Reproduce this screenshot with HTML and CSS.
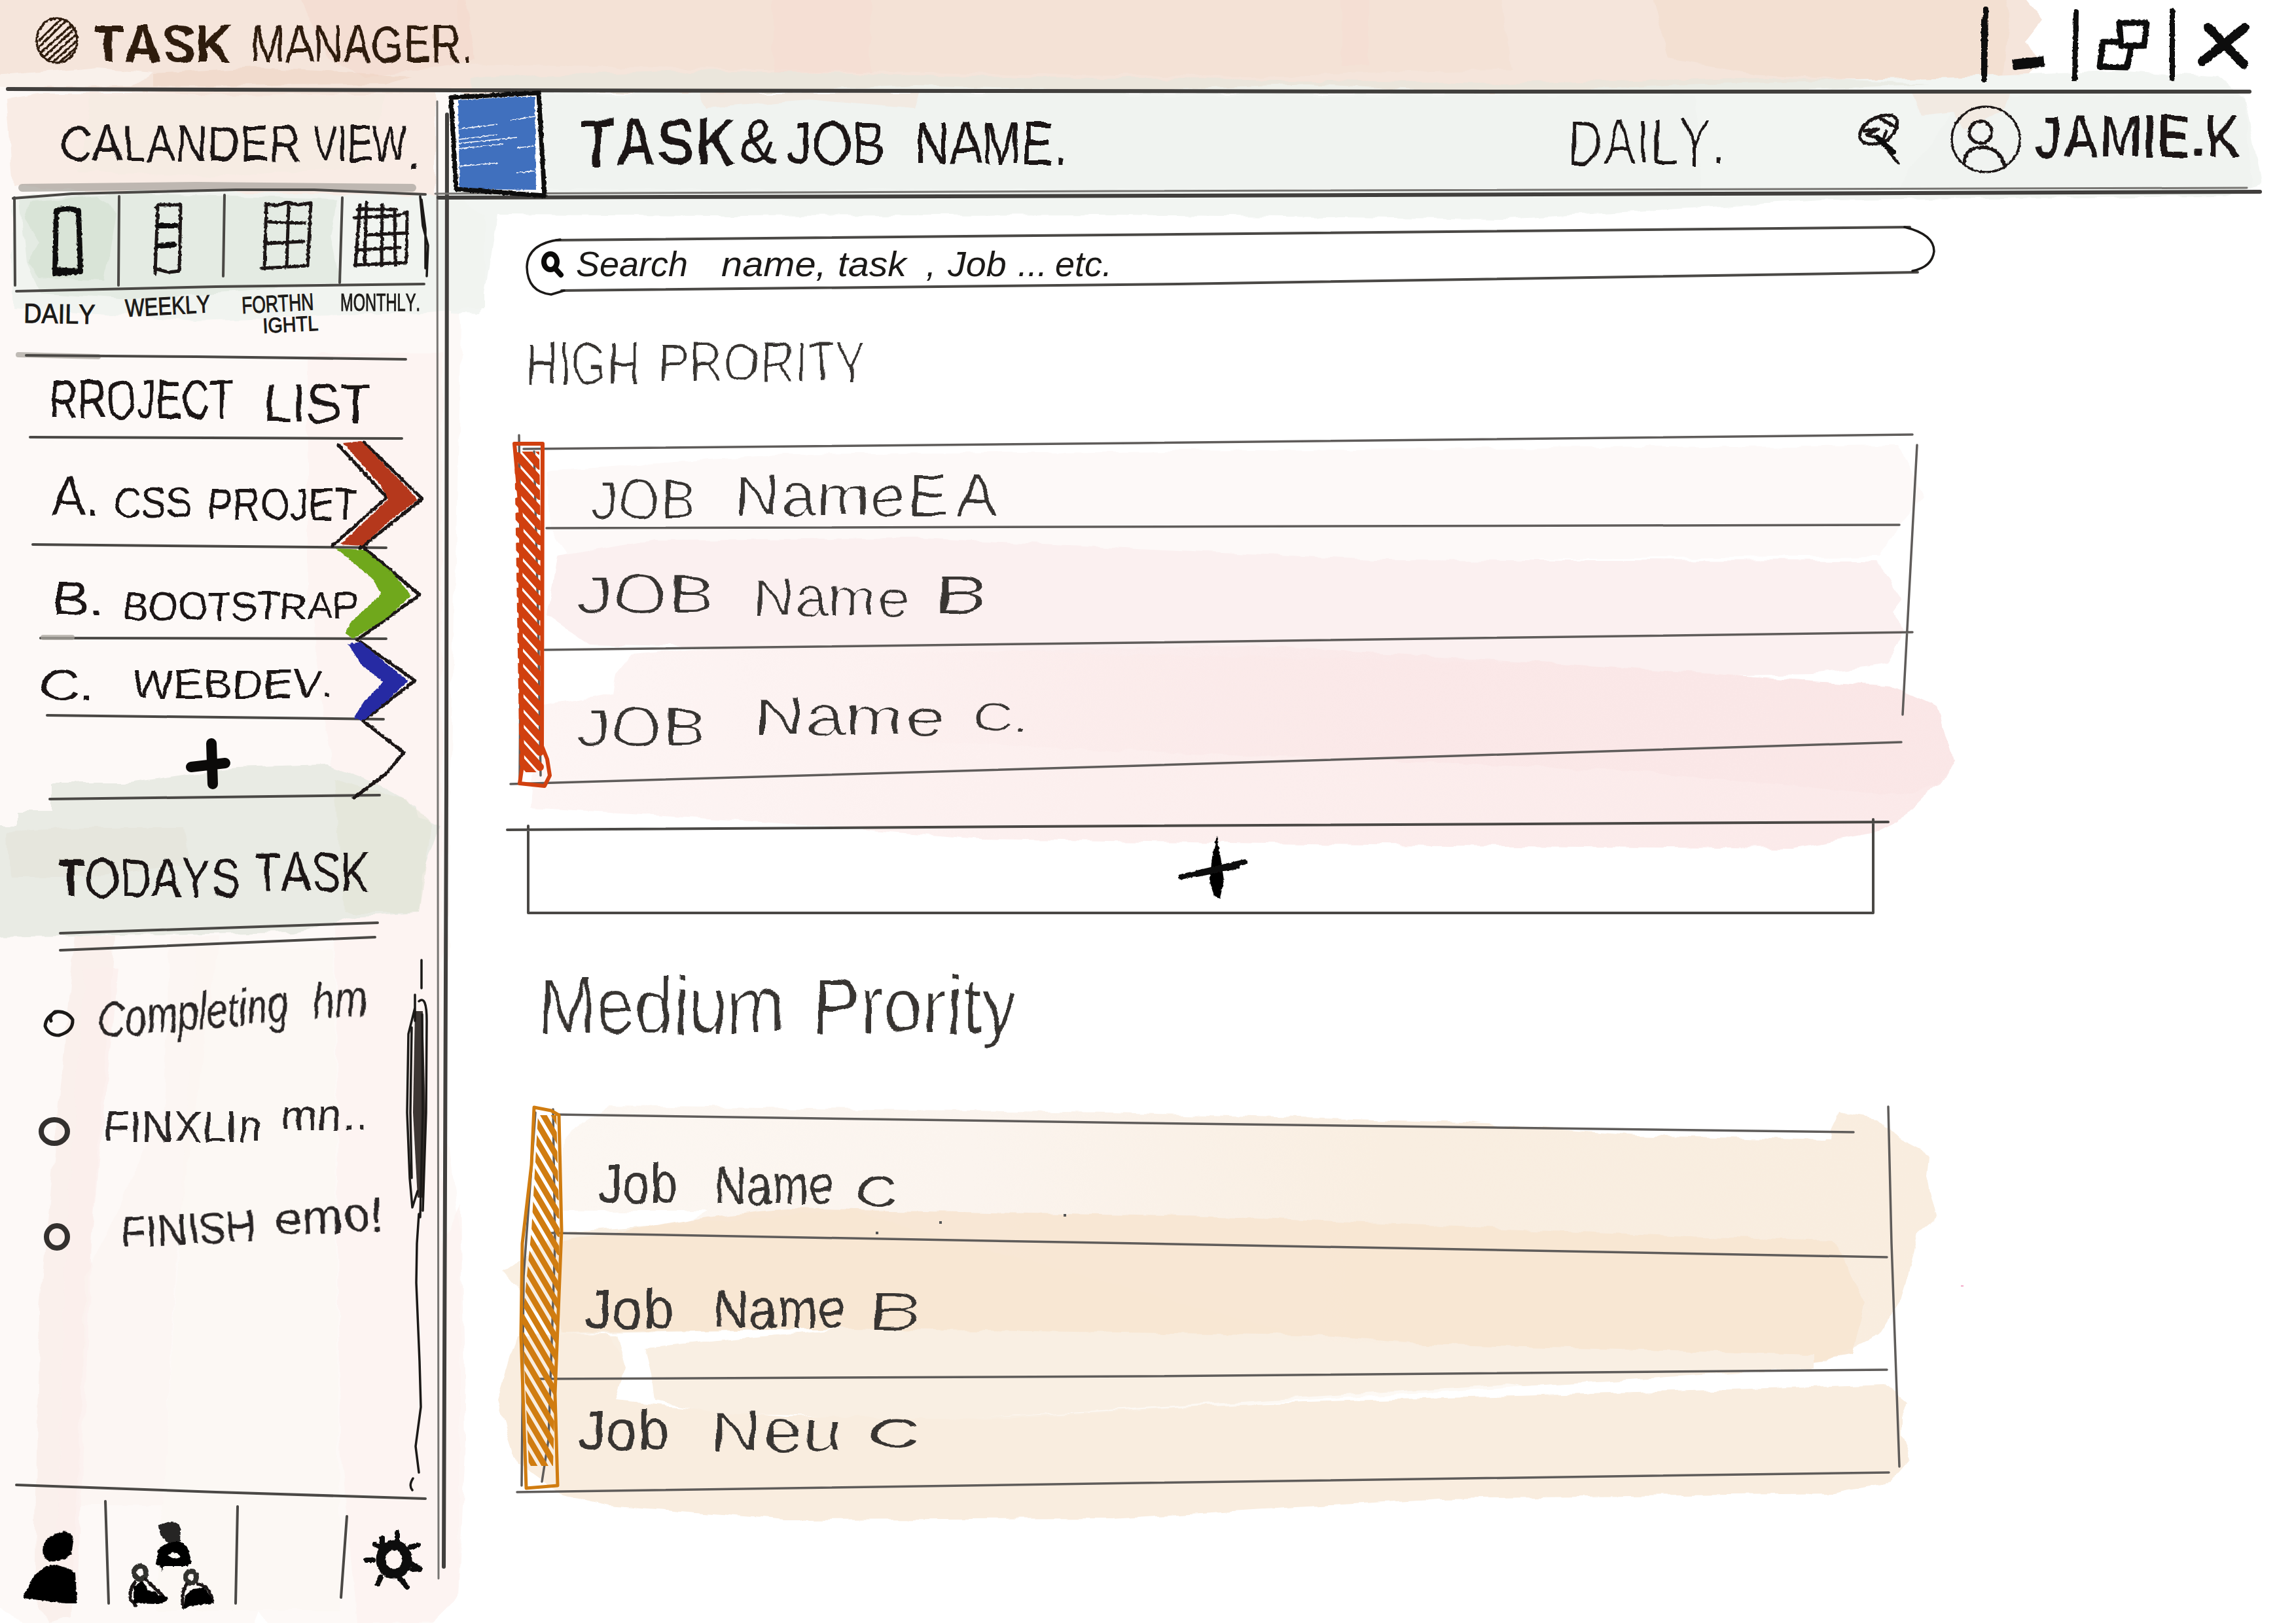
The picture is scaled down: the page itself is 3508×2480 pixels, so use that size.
FILE: index.html
```html
<!DOCTYPE html>
<html lang="en">
<head>
<meta charset="utf-8">
<title>Task Manager</title>
<link rel="stylesheet" href="styles.css">
</head>
<body>
<!-- pencil edge filters and wash gradients -->
<svg class="defs" width="0" height="0" aria-hidden="true">
  <defs>
    <filter id="lettering" x="-15%" y="-20%" width="200%" height="150%">
      <feMorphology in="SourceGraphic" operator="erode" radius="1" result="t"/>
      <feTurbulence type="fractalNoise" baseFrequency=".022" numOctaves="2" seed="7" result="n"/>
      <feDisplacementMap in="t" in2="n" scale="15" xChannelSelector="R" yChannelSelector="G"/>
    </filter>
    <filter id="lettering-small" x="-15%" y="-20%" width="200%" height="150%">
      <feTurbulence type="fractalNoise" baseFrequency=".03" numOctaves="2" seed="9" result="n"/>
      <feDisplacementMap in="SourceGraphic" in2="n" scale="11" xChannelSelector="R" yChannelSelector="G"/>
    </filter>
    <filter id="grain" x="-2%" y="-5%" width="104%" height="110%">
      <feTurbulence type="fractalNoise" baseFrequency=".25" numOctaves="1" seed="3" result="n"/>
      <feDisplacementMap in="SourceGraphic" in2="n" scale="4" xChannelSelector="R" yChannelSelector="G"/>
    </filter>
    <filter id="wash-edge" x="-2%" y="-2%" width="104%" height="104%">
      <feTurbulence type="fractalNoise" baseFrequency=".03" numOctaves="2" seed="5" result="n"/>
      <feDisplacementMap in="SourceGraphic" in2="n" scale="12" xChannelSelector="R" yChannelSelector="G"/>
    </filter>
    <linearGradient id="rose"><stop offset="0" stop-color="#fdf5f4"/><stop offset=".4" stop-color="#fcefee"/><stop offset="1" stop-color="#fbe9e9"/></linearGradient>
    <linearGradient id="rose-deep"><stop offset="0" stop-color="#fae6e6" stop-opacity="0"/><stop offset=".5" stop-color="#fae6e6" stop-opacity=".7"/><stop offset="1" stop-color="#fae6e6" stop-opacity=".8"/></linearGradient>
    <linearGradient id="sand"><stop offset="0" stop-color="#fcf7f2"/><stop offset=".3" stop-color="#fbf4ee"/><stop offset=".6" stop-color="#f9eee1"/><stop offset="1" stop-color="#f9eddf"/></linearGradient>
  </defs>
</svg>
<div class="app">

  <!-- watercolour washes behind the whole window -->
  <svg class="washes" viewBox="0 0 3508 2480" aria-hidden="true">
    <!-- sidebar -->
    <path fill="#fdf9f7" d="M-20 130H690L705 500 690 1100 680 1700 705 1900 700 2440 640 2500H420L395 2462 380 2500H60L-20 2440Z"/>
    <path fill="#fcf2ef" d="M470 540H675V1900L705 1840 712 2200 700 2440 660 2480H545L520 2200 510 1200 470 900Z" opacity=".7"/>
    <path fill="#faf0ec" d="M115 1430L60 2000 52 2440 75 2480 108 2470 132 2000 175 1430Z"/>
    <path fill="#fbefec" d="M130 1480L100 1900 85 2440 118 2440 140 1900 180 1480Z" opacity=".8"/>
    <path fill="#fbf4f0" d="M250 1700L130 1950 120 2300H250L270 1900 335 1430H260Z" opacity=".6"/>
    <path fill="#fbf6f1" d="M300 1450H510L520 2460H240Z" opacity=".6"/>
    <path fill="#f9ece5" d="M10 150L60 142H665V300H260L20 285Z"/>
    <path fill="#f5ede2" d="M140 145H590L560 255 330 270 120 262Z" opacity=".7"/>
    <!-- title bar -->
    <path fill="#f5e5db" d="M-20 -20H3080L3120 30 3095 62 3115 95 3085 130 2940 145 2600 130 2300 145 2000 128 1700 140 1400 130 1070 145 940 140 330 145 -20 132Z"/>
    <path fill="#f3dfd1" d="M700 -20H2290L2310 105 1900 118 1300 108 700 98Z" opacity=".5"/>
    <path fill="#f1ddcf" d="M2520 -20H3060L3072 20 3060 115 3000 132 2680 112 2550 90Z" opacity=".75"/>
    <path fill="#f3d5c9" d="M450 -20H710L725 92 560 118 500 90Z" opacity=".45"/>
    <path fill="#efd3c3" d="M235 112L390 103 630 116 590 128 235 132Z" opacity=".6"/>
    <path fill="#f5dcd2" d="M1180 -20H1330V110H1180ZM2050 -20H2090V100H2050Z" opacity=".5"/>
    <path fill="#fff" d="M-20 118L150 103 235 110 200 132 -20 134Z" opacity=".45"/>
    <!-- main header -->
    <path fill="#f2f5f2" d="M690 150L720 142 1040 142 1500 142 2300 142 2600 128 3000 118 3250 108 3390 118 3430 150 3455 280 3400 300 2800 305 2300 335 1700 328 1100 330 760 328 735 480 690 478Z"/>
    <path fill="#e5e6dc" d="M720 118L1100 108 1600 118 2300 128 2700 118 2950 128 2700 140H720Z" opacity=".6"/>
    <path fill="#edf1ed" d="M830 146H2590L2600 290H830Z" opacity=".4"/>
    <path fill="#edf1ed" d="M3000 146H3430L3440 288H2900Z" opacity=".4"/>
    <path fill="#f2e6dc" d="M1070 142H1405L1398 166 1235 152 1080 165ZM2920 140H3070L3060 170 3000 198 2985 170 2935 175Z" opacity=".7"/>
    <!-- calendar views -->
    <path fill="#f1f4f0" d="M20 300L180 290 700 300 740 330 740 470 640 478 300 490 20 470Z"/>
    <path fill="#e4ebe3" d="M30 305L200 295 515 305 505 360 520 432 200 458 60 448 40 400Z"/>
    <path fill="#d5e1d3" d="M45 310L150 300 178 325 160 430 60 425 42 400 60 370 38 335Z" opacity=".75"/>
    <!-- today's task heading -->
    <path fill="#e9ebe4" d="M-20 1262L25 1262 25 1240 78 1240 78 1196 200 1196 360 1172 500 1168 560 1190 635 1232 640 1250 672 1262 645 1335 640 1395 550 1400 450 1425 -20 1432Z"/>
    <path fill="#e3e4d6" d="M510 1190L620 1222 660 1260 640 1395 525 1395Z" opacity=".6"/>
    <path fill="#e5e3d8" d="M125 1265H280L290 1320 130 1340H15L12 1270Z" opacity=".6"/>
    <!-- high priority -->
    <path fill="#fdf9f8" d="M835 720L1200 694 2900 680 2938 760 2905 800 2870 850 1500 862 880 870 840 800Z"/>
    <path fill="#fbf0f0" d="M850 850L1000 825 1400 822 2100 855 2865 857 2905 915 2890 935 2910 962 2885 1015 2770 1030 2200 1040 1500 1000 900 985 835 940Z"/>
    <path fill="url(#rose)" d="M940 1030L965 1000 1200 980 1700 1000 2350 1012 2890 1048 2960 1080 2975 1130 2985 1162 2965 1198 2940 1215 2900 1255 2860 1275 2740 1297 2000 1290 1500 1282 1150 1255 810 1235 820 1080 935 1060Z"/>
    <path fill="url(#rose-deep)" d="M1300 1000L1900 985 2350 1012 2890 1048 2960 1080 2985 1162 2960 1200 2900 1216 2500 1178 1300 1130Z"/>
    <!-- medium priority -->
    <path fill="url(#sand)" d="M860 1740L930 1690 1700 1700 2240 1715 2500 1735 2790 1742 2810 1700 2870 1710 2910 1745 2948 1765 2945 1800 2960 1860 2930 1885 2905 1985 2870 2040 2790 2080 2200 2100 1300 1960 850 1855Z"/>
    <path fill="#f9efe2" d="M850 1884L1300 1850 2200 2100H900L770 1942Z"/>
    <path fill="#fff" d="M850 1850L1080 1850 1045 1870 850 1885ZM870 2038L1290 2030 985 2060 995 2100 975 2145 945 2140 955 2090 940 2040ZM2240 1718L2800 1740 2790 1700Z"/>
    <path fill="#f7e6d2" d="M1080 1860L1200 1847 1900 1860 2600 1890 2800 1895 2850 1990 2830 2070 2700 2095 2000 2040 1290 2030 860 2036 840 1900Z" opacity=".9"/>
    <path fill="#f9eddf" d="M790 2040L930 2038 955 2090 940 2140 1200 2165 1700 2150 2500 2128 2880 2115 2915 2145 2905 2165 2905 2195 2920 2230 2890 2265 2800 2282 2200 2290 1700 2320 1200 2322 930 2300 860 2285 790 2235 760 2140Z"/>
    <path fill="#f9efe3" d="M990 2060L1290 2030 2770 2070V2090L2300 2120 1500 2170 1100 2160 1000 2140Z"/>
    <path fill="#fff" d="M1480 2168L2300 2115 2400 2125 1800 2150Z" opacity=".6"/>
  </svg>

  <header class="titlebar">
    <svg class="frame" viewBox="0 0 3508 138" aria-hidden="true"><path class="rule heavy" d="M12 136L700 138 2300 140 3437 140"/></svg>
    <svg class="logo" viewBox="50 22 75 80">
      <ellipse class="pen" cx="87" cy="62" rx="31" ry="34"/>
      <path class="pen" d="M60 62L92 30M60 72L101 31M63 80L110 38M68 86L114 44M74 91L117 52M82 94L117 63M92 94L115 74"/>
    </svg>
    <h1 class="row title"><span class="word">TASK</span> <span class="word">MANAGER.</span></h1>
    <nav class="window-buttons">
      <button aria-label="Minimise"><svg viewBox="3015 0 130 138"><path class="marker bar" d="M3031 30V114M3034 14L3032 122" /><path class="marker dash" d="M3075 99L3123 94"/></svg></button>
      <button aria-label="Restore"><svg viewBox="3145 0 155 138"><path class="marker bar" d="M3172 18L3170 120"/><path class="marker box" d="M3238 35H3280L3276 70H3241ZM3236 64H3213L3208 102 3250 103 3256 72"/></svg></button>
      <button aria-label="Close"><svg viewBox="3300 0 150 138"><path class="marker bar" d="M3319 17V120"/><path class="marker cross" d="M3374 42L3428 98M3430 42L3365 94"/></svg></button>
    </nav>
  </header>

  <aside class="sidebar">
    <svg class="frame" viewBox="0 138 680 2342" aria-hidden="true">
      <path class="rule thin" d="M668 155L670 2412"/>
      <path class="rule heavy" d="M683 175L682 1200 678 2394"/>
    </svg>

    <section class="calendar">
      <h2 class="row calendar-title"><span class="word">CALANDER</span> <span class="word">VIEW</span><span class="word">.</span></h2>
      <svg class="frame" viewBox="0 138 680 392" aria-hidden="true">
        <path class="smudge" d="M34 287L300 284 630 287"/>
        <path class="rule" d="M20 303L110 296 360 290 480 290 650 297"/>
        <path class="rule" d="M25 445L330 438 648 434"/>
        <path class="rule" d="M22 302L23 436M182 300L181 436M343 298L341 422M523 302L519 432"/>
        <path class="pen" d="M642 300L646 345 654 375 652 422M644 305L650 350 650 410"/>
      </svg>
      <ul class="views">
        <li class="view daily"><svg viewBox="22 300 160 140"><path class="marker" d="M86 322Q100 316 120 322L123 415 84 418ZM85 412L123 415"/></svg><span class="word">DAILY</span></li>
        <li class="view weekly"><svg viewBox="182 300 160 140"><path class="pen bold" d="M239 317L242 313H276L274 414 258 416 239 411M241 316L237 418"/><path class="marker" d="M242 345H269M242 376L266 374"/></svg><span class="word">WEEKLY</span></li>
        <li class="view fortnight"><svg viewBox="342 300 180 140"><path class="pen bold" d="M407 312L422 314 440 309 456 313 475 310 470 406 400 410M407 312L404 410M441 314L438 408M410 339L466 341M408 372L464 369"/></svg><span class="word">FORTHN</span><span class="word">IGHTL</span></li>
        <li class="view monthly"><svg viewBox="522 300 125 140"><path class="pen bold" d="M550 313L543 406M560 310L557 402M584 313L583 406M603 320L604 405M622 324L621 401 542 405M546 320H605M541 333L610 329 622 324M559 359L620 356M548 382L611 378"/></svg><span class="word">MONTHLY.</span></li>
      </ul>
    </section>

    <section class="projects">
      <svg class="frame" viewBox="0 530 680 688" aria-hidden="true">
        <path class="smudge slim" d="M28 542L150 545" />
        <path class="rule" d="M40 543L300 545 620 549"/>
        <path class="rule" d="M46 668L614 670M50 832L590 837M62 975L590 976M72 1093L586 1099M76 1221L580 1215"/>
        <path class="smudge slim" d="M66 974H110"/>
      </svg>
      <h2 class="row projects-title"><span class="word">RROJECT</span> <span class="word">LIST</span></h2>
      <ul>
        <li class="row project-a"><span class="word">A.</span> <span class="word">CSS</span> <span class="word">PROJET</span>
          <svg class="chevron" viewBox="500 665 160 170"><path class="pen bold" d="M517 680L591 760 508 834M556 676L645 762 550 838"/><path fill="#b5391c" d="M524 677L552 674 592 715 622 745 638 764 600 792 553 834 520 832 593 763 582 742Z"/></svg></li>
        <li class="row project-b"><span class="word">B.</span> <span class="word">BOOTSTRAP</span>
          <svg class="chevron" viewBox="500 835 160 140"><path class="pen bold" d="M557 838L641 909 545 978"/><path fill="#6fa81b" d="M514 838L556 840 600 875 628 910 590 945 540 976 528 968 535 952 582 908 570 885Z"/></svg></li>
        <li class="row project-c"><span class="word">C.</span> <span class="word">WEBDEV.</span>
          <svg class="chevron" viewBox="500 975 160 121"><path class="pen bold" d="M551 981L634 1040 555 1101"/><path fill="#272ba3" d="M532 984L551 981 600 1022 624 1040 590 1072 555 1101 540 1098 556 1072 586 1042 552 1016Z"/></svg></li>
        <li class="add-project"><svg viewBox="270 1096 90 122"><path class="marker plus" d="M323 1136L325 1198M292 1172L344 1166"/></svg>
          <svg class="chevron" viewBox="500 1096 160 122"><path class="pen bold" d="M555 1102L617 1150 590 1182 541 1219"/></svg></li>
      </ul>
    </section>

    <section class="today">
      <svg class="frame" viewBox="0 1218 680 232" aria-hidden="true"><path class="rule" d="M92 1426L577 1410M92 1452L573 1432"/></svg>
      <h2 class="row"><span class="word"><b>T</b>ODAYS</span> <span class="word">TASK</span></h2>
    </section>

    <section class="tasks">
      <svg class="frame scroll" viewBox="0 1450 680 819" aria-hidden="true">
        <path class="pen" d="M644 1467V1510M634 1520V1560M640 1530Q652 1520 652 1560L651 1700 646 1850M634 1540L624 1580 622 1700 626 1800 630 1845 638 1820M640 1855L637 1900 636 1960 641 2080 643 2150 635 2210 640 2250M631 2259Q624 2270 630 2277"/>
        <path class="scroll-thumb" d="M634 1545L646 1545 650 1700 646 1830 638 1830 631 1700Z"/>
        <path class="pen" d="M629 1570L627 1700 629 1800M645 1550L646 1700 642 1860"/>
      </svg>
      <ul>
        <li class="row task-1"><svg class="bullet" viewBox="60 1535 60 55"><path class="pen bold" d="M88 1546Q70 1552 69 1568 74 1582 90 1582 112 1576 111 1558 102 1544 84 1546 74 1554 78 1560"/></svg><span class="word">Completing</span> <span class="word">hm</span></li>
        <li class="row task-2"><svg class="bullet" viewBox="55 1700 60 55"><ellipse class="pen thick" cx="83" cy="1729" rx="20" ry="18"/></svg><span class="word">FINXLIn</span> <span class="word">mn..</span></li>
        <li class="row task-3"><svg class="bullet" viewBox="55 1862 60 55"><ellipse class="pen thick" cx="87" cy="1890" rx="16" ry="17"/></svg><span class="word">FINISH</span> <span class="word">emo!</span></li>
      </ul>
    </section>

    <footer class="dock">
      <svg class="frame" viewBox="0 2269 680 211" aria-hidden="true"><path class="rule" d="M25 2269L330 2280 650 2290M161 2294L166 2450M363 2302L360 2450M530 2317L521 2441"/></svg>
      <svg class="dock-user" viewBox="25 2269 137 211">
        <path d="M66 2362Q72 2345 98 2340 112 2342 112 2355L109 2375Q98 2386 80 2386 62 2384 66 2362Z"/>
        <path d="M36 2438L52 2408Q70 2390 86 2391L108 2398 115 2404 118 2450 100 2450 36 2442Z"/>
      </svg>
      <svg class="dock-team" viewBox="162 2269 200 211">
        <path d="M242 2332Q250 2326 262 2325 276 2326 276 2340L275 2355 262 2360Q250 2354 245 2345Z" opacity=".85"/>
        <path fill-rule="evenodd" d="M238 2390L242 2366Q258 2354 276 2356L286 2364 293 2386 288 2393 249 2393 248 2402 245 2392ZM256 2376Q266 2368 276 2378 268 2386 256 2376Z"/>
        <ellipse class="pen thick" cx="214" cy="2403" rx="9" ry="10"/>
        <path class="pen bold" d="M206 2418Q196 2430 200 2445L207 2453M222 2413L242 2432 254 2443"/>
        <path d="M204 2424L218 2416 226 2430 238 2432 242 2438 256 2440V2446L242 2451 204 2450Z"/>
        <ellipse class="pen thick" cx="292" cy="2410" rx="8" ry="9"/>
        <path class="pen bold" d="M285 2421Q276 2434 280 2456M302 2420Q322 2424 325 2448"/>
        <path d="M283 2438L295 2428 312 2426 322 2440 326 2450 290 2454 280 2460Z"/>
      </svg>
      <svg class="dock-gear" viewBox="525 2269 140 211">
        <ellipse class="gear-ring" cx="602" cy="2383" rx="20" ry="22"/>
        <path class="marker" d="M607 2355V2342M584 2359V2350M585 2366L573 2360M627 2364L638 2361M626 2388L642 2397 630 2398M570 2384L560 2384M582 2410L577 2420M611 2412L622 2425"/>
      </svg>
    </footer>
  </aside>

  <main class="main">
    <header class="page-head">
      <svg class="frame" viewBox="680 138 2828 160" aria-hidden="true">
        <path class="rule thin" d="M665 296L1700 292 3433 287"/>
        <path class="rule heavy" d="M670 302L1800 299 3453 293"/>
      </svg>
      <svg class="swatch" viewBox="684 138 156 166">
        <path fill="#fff" d="M689 149L823 142 832 299 697 289Z"/>
        <path fill="#416fbe" d="M700 153L790 148 817 148 819 290 702 289Z"/>
        <path stroke="#fff" stroke-width="1.5" fill="none" d="M701 197L760 190M780 184L817 178M701 213L760 206M701 219L790 210M701 227L770 220M790 226L815 223M703 254L760 249M790 264L817 261"/>
        <path class="outline" d="M689 149L823 142 832 299 697 289Z"/>
      </svg>
      <h2 class="row page-title"><span class="word">TASK</span><span class="word">&amp;</span><span class="word">JOB</span> <span class="word">NAME.</span></h2>
      <div class="row page-tools">
        <span class="word">DAILY.</span>
        <svg class="find" viewBox="2830 138 80 160"><path class="pen bold" d="M2892 177Q2870 172 2850 190 2834 208 2848 218 2864 224 2884 214 2902 196 2898 182ZM2872 180L2898 196M2848 200L2870 197 2852 206 2872 212M2882 200L2878 212"/><path class="marker" d="M2868 210L2892 232"/><path class="pen" d="M2884 230L2901 250"/></svg>
        <svg class="avatar" viewBox="2975 138 120 160"><ellipse class="pen" cx="3034" cy="213" rx="52" ry="50"/><ellipse class="pen bold" cx="3026" cy="202" rx="17" ry="17"/><path class="pen bold" d="M3001 248Q3004 225 3028 225 3058 226 3063 256"/></svg>
        <span class="word">JAMIE.K</span>
      </div>
    </header>

    <form class="search">
      <svg class="frame" viewBox="680 298 2828 172" aria-hidden="true">
        <path class="rule" d="M850 367L1800 358 2918 347M858 444L1800 434 2930 416"/>
        <path class="pen" d="M856 366Q806 372 805 408 806 446 842 450L862 444M2910 347Q2955 358 2955 384 2952 408 2922 414"/>
      </svg>
      <svg class="glass" viewBox="818 298 50 172"><ellipse class="marker" cx="841" cy="400" rx="10" ry="12"/><path class="marker" d="M848 410L857 420"/></svg>
      <label class="row"><span class="word">Search</span> <span class="word">name,</span> <span class="word">task</span><span class="word">,</span> <span class="word">Job</span><span class="word">...</span><span class="word">etc.</span></label>
    </form>

    <section class="priority high">
      <h3 class="row"><span class="word">HIGH</span> <span class="word">PRORITY</span></h3>
      <svg class="frame" viewBox="680 470 2828 930" aria-hidden="true">
        <defs><pattern id="hatch-high" width="52" height="23" patternUnits="userSpaceOnUse" x="785" y="676"><path class="hatch" d="M6 -48L40 -10M6 -25L40 13M6 -2L40 36M6 21L40 59M6 -71L40 -33"/></pattern></defs>
        <path class="rule light" d="M800 686L1740 677 2922 664M835 807L2902 802M832 993L1740 982 2922 966M780 1198L1740 1170 2905 1134M2929 680L2907 1092M793 665L796 900 794 1190M816 690L822 940 826 1185"/>
        <path class="rule" d="M775 1268L1740 1262 2885 1256M807 1262V1395L2862 1395V1252"/>
        <path fill="url(#hatch-high)" d="M786 690H824L832 1180H794Z"/>
        <path class="tag" d="M786 678L829 678 828 1140 836 1160 840 1185 832 1201 794 1197 798 1170 795 900 797 800Z"/>
      </svg>
      <ul>
        <li class="row high-1"><span class="word">JOB</span> <span class="word">NameE</span> <span class="word">A</span></li>
        <li class="row high-2"><span class="word">JOB</span> <span class="word">Name</span> <span class="word">B</span></li>
        <li class="row high-3"><span class="word">JOB</span> <span class="word">Name</span> <span class="word">C.</span></li>
      </ul>
      <button class="add-job" aria-label="Add job"><svg viewBox="1795 1262 120 134"><path d="M1859 1277L1865 1310 1870 1345 1864 1373 1855 1370 1848 1345 1852 1310Z"/><path class="marker" d="M1804 1340L1902 1317M1828 1336L1890 1324"/></svg></button>
    </section>

    <section class="priority medium">
      <h3 class="row"><span class="word">Medium</span> <span class="word">Prority</span></h3>
      <svg class="frame" viewBox="680 1400 2828 1080" aria-hidden="true">
        <defs><pattern id="hatch-medium" width="70" height="28" patternUnits="userSpaceOnUse" x="795" y="1700"><path class="hatch" d="M0 -112L60 -10M0 -84L60 18M0 -56L60 46M0 -28L60 74M0 0L60 102M0 -140L60 -38"/></pattern></defs>
        <path class="rule light" d="M850 1703L1740 1716 2832 1730M843 1884L1740 1900 2883 1921M820 2107L1740 2103 2883 2093M790 2280L1740 2266 2886 2250M2885 1691L2890 1900 2902 2241M818 1700L800 1950 797 2270M845 1695L848 1900 838 2200 828 2264"/>
        <path fill="url(#hatch-medium)" d="M822 1704H850L855 1880 845 2240 808 2240 798 2020 812 1880Z"/>
        <path class="tag" d="M816 1692L842 1697 854 1704 858 1880 848 2130 852 2270 804 2274 796 2040 798 1900 812 1780Z"/>
        <path fill="#555" d="M1338 1882h4v4h-4zM1435 1866h4v4h-4zM1625 1855h4v4h-4z"/><path fill="#f4a9c8" d="M2996 1964h4v2h-4z"/>
      </svg>
      <ul>
        <li class="row medium-1"><span class="word">Job</span> <span class="word">Name</span> <span class="word">C</span></li>
        <li class="row medium-2"><span class="word">Job</span> <span class="word">Name</span> <span class="word">B</span></li>
        <li class="row medium-3"><span class="word">Job</span> <span class="word">Neu</span> <span class="word">C</span></li>
      </ul>
    </section>
  </main>
</div>
</body>
</html>
```
FILE: styles.css
```css
* { box-sizing: border-box; margin: 0; padding: 0; }

body {
  width: 3508px;
  height: 2480px;
  overflow: hidden;
  background: #fff;
  color: #1b1917;
  font-family: "Liberation Sans", Arial, sans-serif;
  font-kerning: none;
}

ul { list-style: none; }
h1, h2, h3 { font-weight: 400; font-size: inherit; }
button { border: 0; background: none; font: inherit; }
svg { display: block; overflow: visible; flex: none; }
.defs { position: absolute; }

.app {
  position: relative;
  display: grid;
  grid-template: 138px 2342px / 680px 2828px;
}
.washes { position: absolute; inset: 0; width: 3508px; height: 2480px; z-index: -1; filter: url(#wash-edge); }

/* sketched outlines drawn under a section's content */
.frame { position: absolute; inset: 0; width: 100%; height: 100%; pointer-events: none; }
.titlebar, .sidebar, .calendar, .projects, .today, .tasks, .dock,
.page-head, .search, .priority { position: relative; }

/* pens */
.rule, .pen, .marker, .tag, .hatch, .outline, .smudge, .gear-ring {
  fill: none;
  stroke: #1b1917;
  stroke-linecap: round;
  stroke-linejoin: round;
}
.rule { stroke: #4a4845; stroke-width: 4; }
.rule.heavy { stroke: #413f3d; stroke-width: 6; }
.rule.thin { stroke: #777572; stroke-width: 3; }
.rule.light { stroke: #5f5c5a; stroke-width: 3.5; }
.pen { stroke-width: 3.5; }
.pen.bold { stroke-width: 5; }
.pen.thick { stroke-width: 8; stroke: #33302e; }
.marker { stroke-width: 8; stroke: #0b0a09; }
.marker.bar { stroke-width: 8; }
.marker.dash { stroke-width: 16; stroke-linecap: butt; }
.marker.box { stroke-width: 9; }
.marker.cross { stroke-width: 14; }
.marker.plus { stroke-width: 16; }
.smudge { stroke: #aaa69f; stroke-width: 12; opacity: .75; }
.smudge.slim { stroke-width: 8; }
.outline { stroke-width: 7; stroke: #0b0a09; }

/* rough edges of the pencil and the marker */
.chevron, .logo, .swatch, .avatar, .find, .window-buttons svg,
.view svg, .dock-user, .dock-team, .dock-gear, .add-job svg { filter: url(#grain); }

/* hand-lettered words: each has its own size, stretch and offset */
.row { display: flex; align-items: flex-start; }
.word {
  flex: none;
  display: block;
  width: var(--w);
  margin-left: var(--gap, 0);
  margin-top: var(--top, 0);
  font-size: var(--size);
  line-height: 1;
  white-space: nowrap;
  transform: rotate(var(--tilt, 0deg)) scaleX(var(--stretch, 1));
  transform-origin: 0 85%;
  filter: url(#lettering);
}
.sidebar .word, .title .word, .medium li .word { filter: url(#lettering-small); }
.search .word, .view .word { filter: none; }

/* title bar */
.titlebar { grid-column: 1 / -1; display: flex; color: #2e1c11; }
.logo { width: 75px; height: 80px; margin: 22px 17px 0 50px; }
.logo .pen { stroke: #2e1c11; }
.title .word { --size: 82px; --top: 26px; }
.title .word:nth-child(1) { --w: 213px; --stretch: .955; font-weight: 700; }
.title .word:nth-child(2) { --w: 339px; --gap: 28px; --stretch: .775; }
.window-buttons { display: flex; margin: 0 58px 0 auto; }
.window-buttons svg { height: 138px; }
.window-buttons button:nth-child(1) svg { width: 130px; }
.window-buttons button:nth-child(2) svg { width: 155px; }
.window-buttons button:nth-child(3) svg { width: 150px; }

/* sidebar */
.sidebar { display: flex; flex-direction: column; }
.calendar { height: 392px; }
.calendar-title { height: 162px; padding-left: 92px; }
.calendar-title .word { --size: 78px; --top: 42px; }
.calendar-title .word:nth-child(1) { --w: 368px; --stretch: .866; }
.calendar-title .word:nth-child(2) { --w: 144px; --gap: 18px; --stretch: .72; }
.calendar-title .word:nth-child(3) { --w: 20px; --top: 56px; }

.views { display: grid; grid-template-columns: 160px 160px 180px 125px; padding-left: 22px; }
.view svg { width: 100%; height: 140px; }
.view .word { -webkit-text-stroke: 1px currentColor; }
.daily .word { --size: 42px; --w: 110px; --gap: 14px; --top: 18px; --stretch: .9; --tilt: 1deg; }
.weekly .word { --size: 38px; --w: 130px; --gap: 10px; --top: 12px; --stretch: .82; --tilt: -3deg; }
.fortnight .word { --size: 36px; --w: 110px; --gap: 28px; --top: 9px; --stretch: .733; --tilt: -3deg; }
.fortnight .word + .word { --size: 32px; --w: 85px; --gap: 60px; --top: -3px; --stretch: .9; }
.monthly .word { --size: 36px; --w: 122px; --gap: -2px; --top: 5px; --stretch: .656; }

.projects { height: 688px; }
.projects-title { height: 135px; padding-left: 76px; }
.projects-title .word { --size: 84px; }
.projects-title .word:nth-child(1) { --w: 281px; --top: 38px; --stretch: .708; }
.projects-title .word:nth-child(2) { --w: 164px; --top: 44px; --gap: 46px; --stretch: .925; }
.projects .chevron { width: 160px; height: 100%; margin-left: auto; }
.projects li { padding-right: 20px; }
.project-a { height: 170px; padding-left: 80px; }
.project-a .word:nth-child(1) { --size: 88px; --w: 72px; --top: 49px; --stretch: .87; }
.project-a .word:nth-child(2) { --size: 64px; --w: 118px; --top: 71px; --gap: 22px; --stretch: .9; }
.project-a .word:nth-child(3) { --size: 68px; --w: 173px; --top: 71px; --gap: 25px; --stretch: .854; }
.project-b { height: 140px; padding-left: 80px; }
.project-b .word:nth-child(1) { --size: 74px; --w: 83px; --top: 43px; --stretch: 1.15; }
.project-b .word:nth-child(2) { --size: 62px; --w: 300px; --top: 60px; --gap: 25px; --stretch: .94; }
.project-c { height: 121px; padding-left: 60px; }
.project-c .word:nth-child(1) { --size: 66px; --w: 90px; --top: 38px; --stretch: 1.3; }
.project-c .word:nth-child(2) { --size: 62px; --w: 290px; --top: 39px; --gap: 52px; --stretch: 1.08; }
.add-project { display: flex; height: 122px; padding-left: 270px; }
.add-project svg:first-child { width: 90px; height: 122px; }

.today { height: 232px; }
.today .row { padding-left: 88px; }
.today .word:nth-child(1) { --size: 84px; --w: 280px; --top: 81px; --stretch: .81; }
.today .word:nth-child(2) { --size: 86px; --w: 177px; --top: 71px; --gap: 20px; --stretch: .79; }

.tasks { height: 819px; color: #2a2725; }
.scroll-thumb { fill: #1b1412; opacity: .85; }
.bullet { width: 60px; height: 55px; }
.task-1 { height: 200px; padding-left: 60px; }
.task-1 .bullet { margin-top: 85px; }
.task-1 .word { --size: 78px; --tilt: -5deg; font-style: italic; }
.task-1 .word:nth-child(2) { --w: 293px; --gap: 32px; --top: 70px; --stretch: .74; }
.task-1 .word:nth-child(3) { --w: 83px; --gap: 35px; --top: 42px; --stretch: .77; }
.task-2 { height: 160px; padding-left: 55px; }
.task-2 .bullet { margin-top: 50px; }
.task-2 .word { --size: 66px; }
.task-2 .word:nth-child(2) { --w: 242px; --gap: 43px; --top: 38px; }
.task-2 .word:nth-child(3) { --w: 128px; --gap: 30px; --top: 20px; }
.task-3 { height: 160px; padding-left: 55px; }
.task-3 .bullet { margin-top: 52px; }
.task-3 .word { --tilt: -3deg; }
.task-3 .word:nth-child(2) { --size: 66px; --w: 206px; --gap: 71px; --top: 40px; --stretch: .95; }
.task-3 .word:nth-child(3) { --size: 74px; --w: 165px; --gap: 30px; --top: 16px; }

.dock { display: flex; height: 211px; padding-left: 25px; }
.dock svg:not(.frame) { height: 211px; }
.dock-user { width: 137px; }
.dock-team { width: 200px; }
.dock-gear { width: 140px; margin-left: 163px; }
.gear-ring { stroke: #0b0a09; stroke-width: 15; }

/* page header */
.page-head { display: flex; height: 160px; }
.swatch { width: 156px; height: 166px; margin-left: 4px; }
.page-title { margin-left: 46px; }
.page-title .word { filter: url(#lettering-small); }
.page-title .word:nth-child(1) { --size: 104px; --w: 239px; --top: 27px; --stretch: .845; font-weight: 700; filter: url(#lettering); }
.page-title .word:nth-child(2) { --size: 96px; --w: 64px; --gap: 5px; --top: 30px; --stretch: .9; }
.page-title .word:nth-child(3) { --size: 92px; --w: 150px; --gap: 8px; --top: 35px; --stretch: .84; }
.page-title .word:nth-child(4) { --size: 92px; --w: 232px; --gap: 46px; --top: 35px; --stretch: .797; }
.page-tools { margin: 0 83px 0 auto; }
.page-tools svg { height: 160px; }
.page-tools .word:first-child { --size: 100px; --w: 240px; --top: 29px; --stretch: .757; }
.find { width: 80px; margin-left: 195px; }
.avatar { width: 120px; margin-left: 65px; }
.page-tools .word:last-child { --size: 92px; --w: 317px; --gap: 13px; --top: 25px; --stretch: .85; font-weight: 700; }

/* search */
.search { display: flex; height: 172px; padding-left: 138px; }
.glass { width: 50px; height: 172px; margin-right: 12px; }
.search .word { --size: 54px; --top: 78px; font-style: italic; }
.search .word:nth-child(1) { --w: 170px; }
.search .word:nth-child(2) { --w: 160px; --gap: 52px; --stretch: 1.07; }
.search .word:nth-child(3) { --w: 105px; --gap: 18px; --stretch: 1.06; }
.search .word:nth-child(4) { --w: 15px; --gap: 30px; }
.search .word:nth-child(5) { --w: 90px; --gap: 18px; --stretch: 1.03; }
.search .word:nth-child(6) { --w: 45px; --gap: 17px; }
.search .word:nth-child(7) { --w: 88px; --gap: 12px; }

/* priority lists */
.priority .word { color: #383533; }
.high { height: 930px; }
.high h3 { height: 216px; padding-left: 123px; }
.high h3 .word:nth-child(1) { --size: 94px; --w: 175px; --top: 40px; --stretch: .745; }
.high h3 .word:nth-child(2) { --size: 86px; --w: 320px; --top: 40px; --gap: 27px; --stretch: .838; }
.high .tag, .high .hatch { stroke: #d1400f; stroke-width: 6; }
.high .hatch { stroke-width: 12; }
.high-1 { height: 120px; padding-left: 223px; }
.high-1 .word:nth-child(1) { --size: 86px; --w: 162px; --top: 34px; --stretch: .97; }
.high-1 .word:nth-child(2) { --size: 90px; --w: 328px; --gap: 57px; --top: 27px; --stretch: 1.09; }
.high-1 .word:nth-child(3) { --size: 98px; --w: 67px; --gap: 10px; --top: 21px; }
.high-2 { height: 174px; padding-left: 202px; }
.high-2 .word:nth-child(1) { --size: 84px; --w: 213px; --top: 60px; --stretch: 1.3; }
.high-2 .word:nth-child(2) { --size: 84px; --w: 240px; --gap: 55px; --top: 65px; --stretch: 1.07; }
.high-2 .word:nth-child(3) { --size: 88px; --w: 90px; --gap: 37px; --top: 58px; --stretch: 1.45; }
.high-3 { height: 282px; padding-left: 202px; }
.high-3 .word:nth-child(1) { --size: 84px; --w: 201px; --top: 89px; --stretch: 1.22; }
.high-3 .word:nth-child(2) { --size: 84px; --w: 293px; --gap: 69px; --top: 73px; --stretch: 1.3; }
.high-3 .word:nth-child(3) { --size: 66px; --w: 90px; --gap: 40px; --top: 82px; --stretch: 1.35; }
.add-job { display: flex; width: 2055px; height: 134px; margin-left: 127px; padding-left: 988px; }
.add-job svg { width: 120px; height: 134px; }

.medium { height: 1080px; }
.medium h3 { height: 303px; padding-left: 143px; }
.medium h3 .word { --size: 120px; --top: 76px; }
.medium h3 .word:nth-child(1) { --w: 375px; --stretch: .88; }
.medium h3 .word:nth-child(2) { --w: 311px; --gap: 44px; --stretch: .9; }
.medium .tag, .medium .hatch { stroke: #d07c10; stroke-width: 5; }
.medium .hatch { stroke-width: 9; }
.medium-1 { height: 192px; padding-left: 234px; }
.medium-1 .word:nth-child(1) { --size: 88px; --w: 121px; --top: 62px; --stretch: .85; }
.medium-1 .word:nth-child(2) { --size: 84px; --w: 181px; --gap: 57px; --top: 66px; --stretch: .81; }
.medium-1 .word:nth-child(3) { --size: 66px; --w: 62px; --gap: 35px; --top: 84px; --stretch: 1.3; }
.medium-2 { height: 205px; padding-left: 213px; }
.medium-2 .word:nth-child(1) { --size: 88px; --w: 137px; --top: 62px; --stretch: .96; }
.medium-2 .word:nth-child(2) { --size: 84px; --w: 200px; --gap: 60px; --top: 63px; --stretch: .9; }
.medium-2 .word:nth-child(3) { --size: 88px; --w: 88px; --gap: 35px; --top: 64px; --stretch: 1.5; filter: url(#lettering); }
.medium-3 { height: 170px; padding-left: 203px; }
.medium-3 .word:nth-child(1) { --size: 88px; --w: 139px; --top: 42px; --stretch: .98; }
.medium-3 .word:nth-child(2) { --size: 90px; --w: 203px; --gap: 63px; --top: 43px; --stretch: 1.23; filter: url(#lettering); }
.medium-3 .word:nth-child(3) { --size: 62px; --w: 81px; --gap: 38px; --top: 58px; --stretch: 1.75; }
```
